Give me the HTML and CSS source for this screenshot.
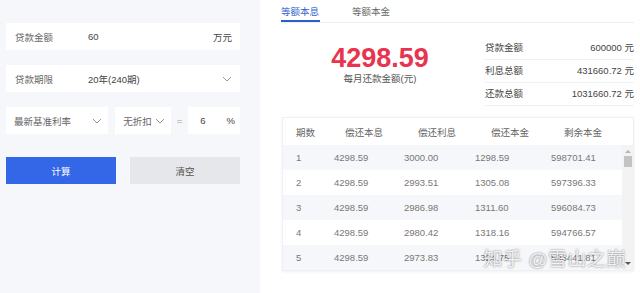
FILE: index.html
```html
<!DOCTYPE html>
<html lang="zh-CN">
<head>
    <meta charset="UTF-8">
    <meta name="viewport" content="width=device-width, initial-scale=1.0">
    <title>房贷计算器</title>
    <link rel="stylesheet" href="styles.css">
</head>
<body>
    <div class="form-panel">
        <div class="field">
            <span class="label">贷款金额</span>
            <span class="value">60</span>
            <span class="unit">万元</span>
        </div>
        <div class="field">
            <span class="label">贷款期限</span>
            <span class="value">20年(240期)</span>
            <svg class="arrow" width="10" height="6" viewBox="0 0 10 6"><path d="M1 1l4 4 4-4" fill="none" stroke="#999" stroke-width="1"/></svg>
        </div>
        <div class="rate-row">
            <div class="select select-base">
                <span>最新基准利率</span>
                <svg class="arrow" width="10" height="6" viewBox="0 0 10 6"><path d="M1 1l4 4 4-4" fill="none" stroke="#999" stroke-width="1"/></svg>
            </div>
            <div class="select select-discount">
                <span>无折扣</span>
                <svg class="arrow" width="10" height="6" viewBox="0 0 10 6"><path d="M1 1l4 4 4-4" fill="none" stroke="#999" stroke-width="1"/></svg>
            </div>
            <span class="equals">=</span>
            <div class="rate-input">
                <span>6</span>
                <span>%</span>
            </div>
        </div>
        <div class="buttons">
            <button class="btn-calc">计算</button>
            <button class="btn-clear">清空</button>
        </div>
    </div>

    <div class="result-panel">
        <div class="tabs">
            <div class="tab active">等额本息</div>
            <div class="tab">等额本金</div>
        </div>

        <div class="summary">
            <div class="monthly">
                <div class="monthly-num">4298.59</div>
                <div class="monthly-label">每月还款金额(元)</div>
            </div>
            <div class="totals">
                <div class="total-row"><span>贷款金额</span><span>600000 元</span></div>
                <div class="total-row"><span>利息总额</span><span>431660.72 元</span></div>
                <div class="total-row"><span>还款总额</span><span>1031660.72 元</span></div>
            </div>
        </div>

        <div class="schedule">
            <div class="row head">
                <span>期数</span><span>偿还本息</span><span>偿还利息</span><span>偿还本金</span><span>剩余本金</span>
            </div>
            <div class="body">
                <div class="rows">
                    <div class="row"><span>1</span><span>4298.59</span><span>3000.00</span><span>1298.59</span><span>598701.41</span></div>
                    <div class="row"><span>2</span><span>4298.59</span><span>2993.51</span><span>1305.08</span><span>597396.33</span></div>
                    <div class="row"><span>3</span><span>4298.59</span><span>2986.98</span><span>1311.60</span><span>596084.73</span></div>
                    <div class="row"><span>4</span><span>4298.59</span><span>2980.42</span><span>1318.16</span><span>594766.57</span></div>
                    <div class="row"><span>5</span><span>4298.59</span><span>2973.83</span><span>1324.75</span><span>593441.81</span></div>
                </div>
                <div class="scrollbar">
                    <span class="up"></span>
                    <span class="thumb"></span>
                    <span class="down"></span>
                </div>
            </div>
            <div class="watermark">知乎 @雪山之巅</div>
        </div>
    </div>
</body>
</html>
```

FILE: styles.css
```css
body {
    margin: 0;
    display: flex;
    height: 293px;
    font-family: 'Liberation Sans', 'Noto Sans CJK SC', sans-serif;
    font-size: 9.5px;
    color: #555;
    background: #fff;
    overflow: hidden;
}

.form-panel {
    width: 234px;
    padding: 23px 20px 0 6px;
    background: #f6f7fb;
}

.field {
    display: flex;
    align-items: center;
    height: 27px;
    padding: 0 8px 0 9px;
    margin-bottom: 15px;
    background: #fff;
}

.field .label {
    width: 73px;
    color: #666;
}

.field .value {
    flex: 1;
    color: #444;
}

.field .unit {
    color: #444;
}

.arrow {
    display: block;
}

.rate-row {
    display: flex;
    align-items: center;
    gap: 7px;
    height: 27px;
}

.select {
    display: flex;
    align-items: center;
    justify-content: space-between;
    height: 27px;
    background: #fff;
    color: #666;
}

.select-base {
    width: 103px;
    padding: 0 6px 0 8px;
    box-sizing: border-box;
}

.select-discount {
    width: 56px;
    padding: 0 6px 0 8px;
    box-sizing: border-box;
}

.equals {
    color: #999;
    margin: 0 -1px;
}

.rate-input {
    display: flex;
    justify-content: space-between;
    align-items: center;
    width: 52px;
    height: 27px;
    padding: 0 5px 0 12px;
    box-sizing: border-box;
    background: #fff;
    color: #444;
}

.buttons {
    display: flex;
    justify-content: space-between;
    margin-top: 23px;
}

.buttons button {
    height: 27px;
    border: none;
    font-family: inherit;
    font-size: 9.5px;
    cursor: pointer;
}

.btn-calc {
    width: 110px;
    background: #3367e8;
    color: #fff;
}

.btn-clear {
    width: 110px;
    background: #e6e7eb;
    color: #555;
}

.result-panel {
    flex: 1;
    padding: 0 8px 0 21px;
}

.tabs {
    display: flex;
    gap: 32px;
    height: 22px;
    border-bottom: 1px solid #eceef2;
}

.tab {
    height: 20px;
    padding-top: 4px;
    box-sizing: border-box;
    color: #666;
    width: 39px;
    white-space: nowrap;
}

.tab.active {
    color: #3264cc;
    border-bottom: 2px solid #2f5fc4;
    height: 22px;
}

.summary {
    display: flex;
    height: 94px;
}

.monthly {
    width: 198px;
    text-align: center;
    padding-top: 20px;
}

.monthly-num {
    font-size: 27px;
    font-weight: bold;
    color: #e8344f;
    line-height: 30px;
}

.monthly-label {
    color: #555;
    margin-top: -2px;
}

.totals {
    flex: 1;
    margin-left: 6px;
    padding-top: 14px;
}

.total-row {
    display: flex;
    justify-content: space-between;
    height: 23px;
    line-height: 22px;
    border-bottom: 1px solid #f0f1f4;
    box-sizing: border-box;
    color: #444;
}

.schedule {
    position: relative;
    width: 350px;
    margin-left: 1px;
    border: 1px solid #eef0f3;
    box-shadow: 0 1px 3px rgba(0, 0, 0, 0.06);
}

.row {
    display: grid;
    grid-template-columns: 51px 70px 71px 76px 1fr;
    align-items: center;
    height: 25px;
    color: #777;
}

.row span:first-child {
    padding-left: 13px;
}

.row.head {
    height: 27px;
    color: #666;
    grid-template-columns: 51px 73px 73px 73px 1fr;
}

.row.head span {
    padding-left: 11px;
}

.row.head span:first-child {
    padding-left: 13px;
}

.rows .row:nth-child(odd) {
    background: #f6f7fa;
}

.body {
    display: flex;
}

.rows {
    flex: 1;
}

.scrollbar {
    display: flex;
    flex-direction: column;
    align-items: center;
    width: 11px;
    background: #f3f3f3;
}

.scrollbar .up {
    margin-top: 5px;
    border: 3px solid transparent;
    border-bottom: 3px solid #b5b5b5;
    border-top: none;
}

.scrollbar .thumb {
    width: 8px;
    height: 11px;
    margin-top: 3px;
    background: #c3c3c3;
}

.scrollbar .down {
    margin-top: auto;
    margin-bottom: 5px;
    border: 3px solid transparent;
    border-top: 3px solid #555;
    border-bottom: none;
}

.watermark {
    position: absolute;
    right: 7px;
    bottom: -1px;
    font-size: 19px;
    color: rgba(255, 255, 255, 0.85);
    text-shadow: 0 0 2px rgba(0, 0, 0, 0.55);
    letter-spacing: 0.5px;
}
```
